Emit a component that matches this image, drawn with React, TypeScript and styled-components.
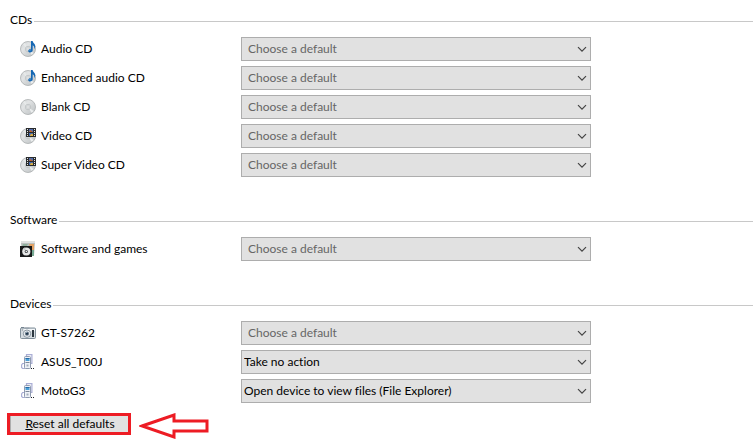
import React, { useId } from "react";
import styled, { createGlobalStyle } from "styled-components";

const GlobalStyle = createGlobalStyle`
  * { box-sizing: border-box; }
  body {
    margin: 0;
    background: #fff;
    color: #000;
    font-family: Lato, "Open Sans", sans-serif;
    font-size: 12px;
    line-height: 16px;
    font-variant-ligatures: none;
  }
`;

const Page = styled.main`
  display: flex;
  flex-direction: column;
  padding: 12px 0 7px;
`;

const Sections = styled.div`
  display: flex;
  flex-direction: column;
  gap: 35px;
`;

const Section = styled.section`
  padding-left: 10px;
`;

const Heading = styled.h2`
  display: flex;
  align-items: center;
  gap: 2px;
  margin: 0 0 9px;
  font-size: 12px;
  font-weight: 400;
  line-height: 16px;

  &::after {
    content: "";
    flex: 1;
    height: 1px;
    margin-top: 3px;
    background: #c8c8c8;
  }
`;

const Rows = styled.div`
  display: flex;
  flex-direction: column;
  gap: 5px;
`;

const Row = styled.div`
  display: grid;
  grid-template-columns: 221px minmax(0, 350px);
  align-items: center;
  padding: 0 16px 0 10px;
`;

const Label = styled.label`
  display: flex;
  align-items: center;
  gap: 5px;
  white-space: nowrap;
`;

const Icon = styled.svg`
  flex: none;
  width: 16px;
  height: 16px;
`;

const SelectBox = styled.div`
  position: relative;
`;

const Select = styled.select<{ $unset: boolean }>`
  display: block;
  appearance: none;
  width: 100%;
  height: 24px;
  margin: 0;
  padding: 0 24px 0 ${(p) => (p.$unset ? 6 : 2)}px;
  border: 1px solid #adadad;
  border-radius: 0;
  background: #e1e1e1;
  color: ${(p) => (p.$unset ? "#666" : "#000")};
  font: inherit;
  font-variant-ligatures: none;
`;

const Chevron = styled.svg`
  position: absolute;
  top: 9px;
  right: 4px;
  width: 10px;
  height: 7px;
  pointer-events: none;
`;

const Footer = styled.footer`
  display: flex;
  align-items: flex-start;
  gap: 8px;
  padding: 10px 7px 0;
`;

const ResetButton = styled.button`
  width: 124px;
  height: 22px;
  padding: 0 0 0 2px;
  border: 3px solid #ed1c24;
  border-radius: 0;
  background: #e1e1e1;
  box-shadow: inset 1px 0 #adadad;
  color: #000;
  font: inherit;
  white-space: nowrap;
`;

const Arrow = styled.svg`
  width: 70px;
  height: 26px;
`;

function Disc() {
  const id = useId();
  return (
    <>
      <defs>
        <linearGradient id={id} x1="0" y1="0" x2="1" y2="1">
          <stop offset="0" stopColor="#cdd0d2" />
          <stop offset=".35" stopColor="#e2e4e5" />
          <stop offset=".6" stopColor="#d2d5d6" />
          <stop offset="1" stopColor="#bfc4c6" />
        </linearGradient>
      </defs>
      <circle cx="8" cy="8" r="7.5" fill={`url(#${id})`} stroke="#a9adaf" strokeWidth=".8" />
      <path d="M8 8 3 3.4A7 7 0 0 1 5 2Z" fill="#e8eaea" />
      <path d="M8 8 13.6 12A7 7 0 0 1 11.6 13.8Z" fill="#eceeee" />
      <circle cx="8" cy="8" r="2.7" fill="#dfe2e3" stroke="#b9bdbf" strokeWidth=".7" />
      <circle cx="8" cy="8" r="1.2" fill="#fff" stroke="#a5a9ab" strokeWidth=".5" />
    </>
  );
}

function BlankDiscIcon() {
  return (
    <Icon viewBox="0 0 16 16" aria-hidden="true">
      <Disc />
    </Icon>
  );
}

function AudioDiscIcon() {
  return (
    <Icon viewBox="0 0 16 16" aria-hidden="true">
      <Disc />
      <path d="M11 0h1.7c.1 2 2.7 2.8 2.6 5.3 0 1.2-.5 2-1.2 2.7.5-1.9.1-2.9-1.4-3.7v4.9c0 1.4-1.2 2.2-2.5 2.2-1.2 0-2.1-.7-2-1.5.2-1.3 1.4-2 2.8-1.6Z" fill="#1668b4" />
      <path d="M9 9.8c.3-.7 1.2-1 2-.8" fill="none" stroke="#4ba2df" strokeWidth=".8" />
    </Icon>
  );
}

function VideoDiscIcon() {
  return (
    <Icon viewBox="0 0 16 16" aria-hidden="true">
      <Disc />
      <rect x="6" width="10" height="9" fill="#292b2d" />
      <path d="M7.5 1v8M14.5 1v8" stroke="#e4e4e4" strokeWidth="1" strokeDasharray="1 1" />
      <rect x="9" y="1" width="4" height="3" fill="#526eac" />
      <path d="M9 4 10.5 2l2.5 2Z" fill="#c0622e" />
      <rect x="9" y="5" width="4" height="3" fill="#4269ae" />
      <path d="M10 8c0-2.5 2.5-3 3-1.5V8Z" fill="#d9ae43" />
    </Icon>
  );
}

function SoftwareIcon() {
  return (
    <Icon viewBox="0 0 16 16" aria-hidden="true">
      <path d="M1 1h14l-1 14H2Z" fill="#b9bfbd" />
      <path d="M1 0h14v2H1Z" fill="#e0e2e1" />
      <path d="M3 3h5L6 6H2Z" fill="#8fae9d" />
      <path d="M9 3h5v6l-3 1Z" fill="#e3a265" />
      <path d="M12 9h2v6h-2Z" fill="#78aa94" />
      <rect y="5" width="12" height="11" fill="#17191a" />
      <circle cx="6.3" cy="10.5" r="4.1" fill="#e5e7e7" />
      <path d="M6.3 10.5 3 8.1A4 4 0 0 1 5 6.6Z" fill="#c5c9ca" />
      <circle cx="6.3" cy="10.5" r="1.6" fill="#414548" />
      <circle cx="6.3" cy="10.5" r=".7" fill="#fff" />
    </Icon>
  );
}

function CameraIcon() {
  return (
    <Icon viewBox="0 0 16 16" aria-hidden="true">
      <path d="M1 3V2h3v1Z" fill="#687785" />
      <rect x=".5" y="3" width="15" height="10.5" rx="1" fill="#d5dce1" stroke="#82909b" />
      <path d="M1 4h14v2H1Z" fill="#f3f6f8" />
      <path d="M4.5 2.5h5v1.5h-5Z" fill="#9aa5af" />
      <path d="M12 5h2v7h-2Z" fill="#2c3740" />
      <circle cx="7" cy="8.7" r="3.7" fill="#edf1f4" stroke="#73818d" strokeWidth=".8" />
      <circle cx="7" cy="8.7" r="2.1" fill="#647585" />
      <circle cx="7" cy="8.7" r="1" fill="#162e43" />
      <path d="m5.8 7.6 1-.7" stroke="#c5dcea" />
      <path d="M1.5 5h1.8" stroke="#65727e" />
    </Icon>
  );
}

function PhoneIcon() {
  return (
    <Icon viewBox="0 0 16 16" aria-hidden="true">
      <path d="M6.5 3V.6h5.4v8.8h-1M5 9.5H2.6L1.6 11v2.5l1 1H5" fill="none" stroke="#aaaed5" strokeWidth="1.2" />
      <rect x="4.5" y="2.5" width="6" height="12" rx="1" fill="#eef1f7" stroke="#8f9aaf" />
      <rect x="5.5" y="4" width="4" height="3" fill="#4aa0d8" />
      <path d="M5.5 4h4v1h-4Z" fill="#2269a5" />
      <path d="M5.5 8.5h4" stroke="#7b8799" />
      <path d="M6.5 10.5h2v2h-2Z" fill="#a3adbb" />
      <path d="M11 14.5h1m1 0h1" stroke="#1b2026" strokeWidth="1.2" />
    </Icon>
  );
}

const UNSET = "Choose a default";
const NO_ACTION = "Take no action";
const OPEN_FILES = "Open device to view files (File Explorer)";

type Item = { name: string; icon: React.ComponentType; value: string };

const groups: { title: string; items: Item[] }[] = [
  {
    title: "CDs",
    items: [
      { name: "Audio CD", icon: AudioDiscIcon, value: UNSET },
      { name: "Enhanced audio CD", icon: AudioDiscIcon, value: UNSET },
      { name: "Blank CD", icon: BlankDiscIcon, value: UNSET },
      { name: "Video CD", icon: VideoDiscIcon, value: UNSET },
      { name: "Super Video CD", icon: VideoDiscIcon, value: UNSET },
    ],
  },
  {
    title: "Software",
    items: [{ name: "Software and games", icon: SoftwareIcon, value: UNSET }],
  },
  {
    title: "Devices",
    items: [
      { name: "GT-S7262", icon: CameraIcon, value: UNSET },
      { name: "ASUS_T00J", icon: PhoneIcon, value: NO_ACTION },
      { name: "MotoG3", icon: PhoneIcon, value: OPEN_FILES },
    ],
  },
];

function DefaultRow({ name, icon: ItemIcon, value }: Item) {
  const id = useId();
  return (
    <Row>
      <Label htmlFor={id}>
        <ItemIcon />
        {name}
      </Label>
      <SelectBox>
        <Select id={id} defaultValue={value} $unset={value === UNSET}>
          <option>{value}</option>
        </Select>
        <Chevron viewBox="0 0 10 7" aria-hidden="true">
          <path d="m1 1.2 4 4 4-4" fill="none" stroke="#444" strokeWidth="1.2" />
        </Chevron>
      </SelectBox>
    </Row>
  );
}

export default function App() {
  return (
    <>
      <GlobalStyle />
      <Page>
        <Sections>
          {groups.map((group) => (
            <Section key={group.title}>
              <Heading>{group.title}</Heading>
              <Rows>
                {group.items.map((item) => (
                  <DefaultRow key={item.name} {...item} />
                ))}
              </Rows>
            </Section>
          ))}
        </Sections>
        <Footer>
          <ResetButton type="button">
            <u>R</u>eset all defaults
          </ResetButton>
          <Arrow viewBox="0 0 70 26" aria-hidden="true">
            <path d="M3 13 35 2v6h33v10H35v6Z" fill="#fff" stroke="#ed1c24" strokeWidth="3" />
          </Arrow>
        </Footer>
      </Page>
    </>
  );
}
